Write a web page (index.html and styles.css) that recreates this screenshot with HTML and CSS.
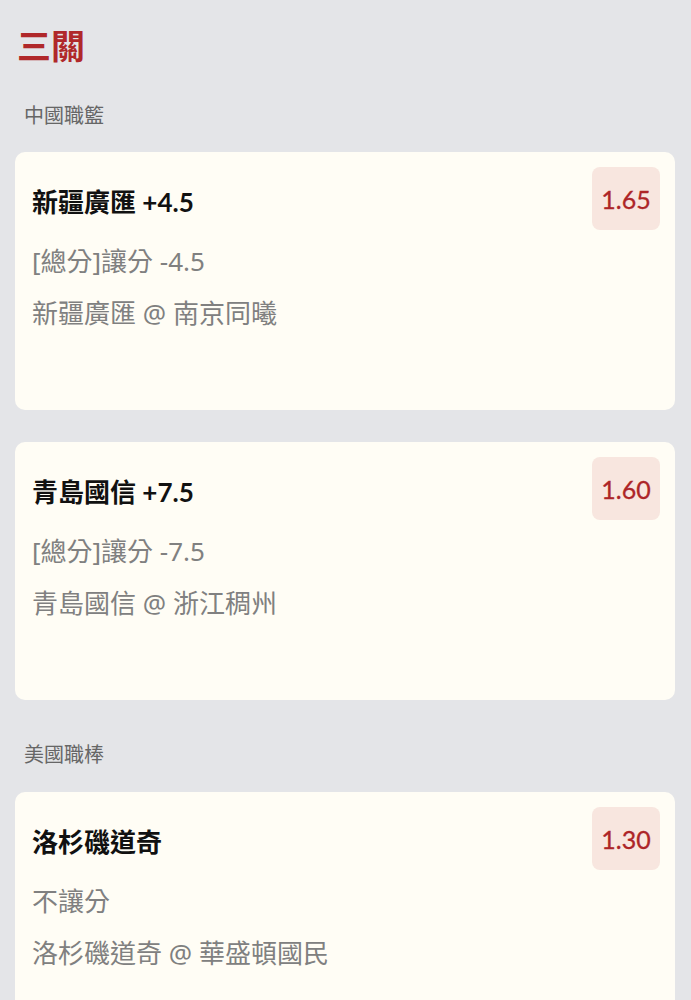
FILE: index.html
```html
<!DOCTYPE html>
<html lang="zh-Hant">
<head>
    <meta charset="UTF-8">
    <meta name="viewport" content="width=device-width, initial-scale=1.0">
    <title>三關</title>
    <link rel="stylesheet" href="styles.css">
</head>
<body>
    <div class="page">
        <h1 class="title">三關</h1>

        <section class="league">
            <h2 class="league-name">中國職籃</h2>
            <div class="bet">
                <div class="bet-head">
                    <span class="bet-pick">新疆廣匯 +4.5</span>
                    <span class="odds">1.65</span>
                </div>
                <p class="bet-line">[總分]讓分 -4.5</p>
                <p class="bet-line">新疆廣匯 @ 南京同曦</p>
            </div>
            <div class="bet">
                <div class="bet-head">
                    <span class="bet-pick">青島國信 +7.5</span>
                    <span class="odds">1.60</span>
                </div>
                <p class="bet-line">[總分]讓分 -7.5</p>
                <p class="bet-line">青島國信 @ 浙江稠州</p>
            </div>
        </section>

        <section class="league">
            <h2 class="league-name">美國職棒</h2>
            <div class="bet">
                <div class="bet-head">
                    <span class="bet-pick">洛杉磯道奇</span>
                    <span class="odds">1.30</span>
                </div>
                <p class="bet-line">不讓分</p>
                <p class="bet-line">洛杉磯道奇 @ 華盛頓國民</p>
            </div>
        </section>
    </div>
</body>
</html>
```

FILE: styles.css
```css
body {
    margin: 0;
    background: #e4e5e8;
    font-family: 'Lato', 'Noto Sans CJK TC', sans-serif;
    color: #111;
}
.page {
    padding: 0 16px 0 15px;
}
.title {
    margin: 26px 0 0 2px;
    font-size: 34px;
    line-height: 40px;
    font-weight: 700;
    color: #b0282a;
}
.league-name {
    margin: 36px 0 24px 9px;
    font-size: 20px;
    line-height: 26px;
    font-weight: 400;
    color: #666;
}
.league + .league .league-name {
    margin-top: 41px;
    margin-bottom: 25px;
}
.bet {
    background: #fffdf5;
    border-radius: 10px;
    padding: 15px 15px 79px 17px;
    margin-bottom: 32px;
}
.bet-head {
    display: flex;
    justify-content: space-between;
    align-items: center;
}
.bet-pick {
    font-size: 26px;
    font-weight: 700;
    margin-top: 3px;
}
.odds {
    width: 68px;
    height: 63px;
    display: flex;
    align-items: center;
    justify-content: center;
    background: #f8e6df;
    border-radius: 8px;
    color: #ad2528;
    font-size: 25px;
    -webkit-text-stroke: 0.3px #ad2528;
}
.bet-line {
    margin: 13px 0 0;
    font-family: 'Noto Sans', 'Noto Sans CJK TC', sans-serif;
    font-size: 26px;
    line-height: 36px;
    color: #808080;
}
.bet-line + .bet-line {
    margin-top: 16px;
}
```
